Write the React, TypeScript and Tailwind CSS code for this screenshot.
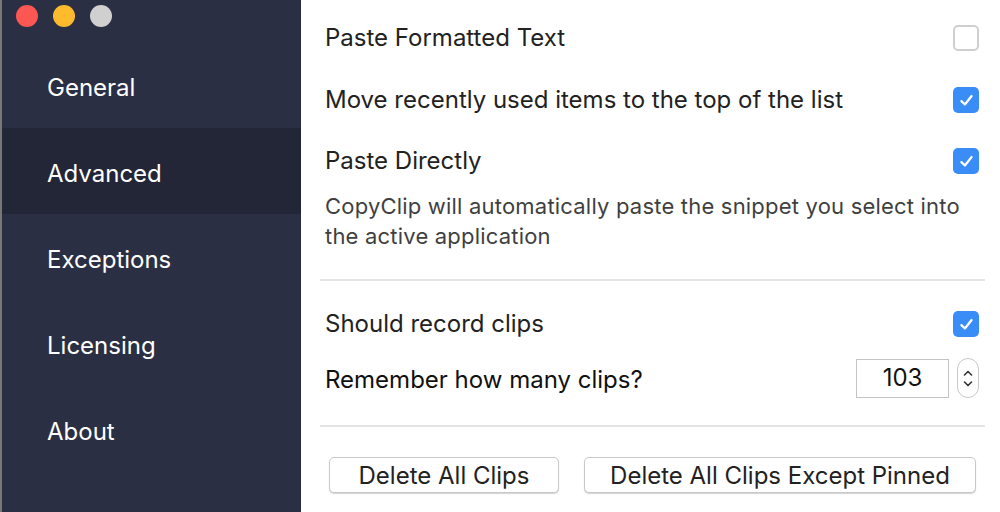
import { ReactNode } from "react";

const NAV = ["General", "Advanced", "Exceptions", "Licensing", "About"];

function Casilla({ marcada }: { marcada: boolean }) {
  if (!marcada) {
    return <div className="h-[26px] w-[26px] shrink-0 rounded-[5px] border-2 border-[#cfcfcf] bg-white" />;
  }
  return (
    <div className="flex h-[26px] w-[26px] shrink-0 items-center justify-center rounded-[5px] bg-[#3a8df6]">
      <svg viewBox="0 0 16 16" className="h-[17px] w-[17px]" fill="none">
        <path d="M3.2 8.6 L6.5 11.8 L12.8 3.8" stroke="white" strokeWidth="2.1" strokeLinecap="round" strokeLinejoin="round" />
      </svg>
    </div>
  );
}

function Fila({ alto, children, marcada }: { alto: string; children: ReactNode; marcada: boolean }) {
  return (
    <div className={`flex items-center justify-between ${alto}`}>
      <span className="text-[24px] text-[#222]">{children}</span>
      <Casilla marcada={marcada} />
    </div>
  );
}

function Boton({ children, ancho }: { children: ReactNode; ancho: string }) {
  return (
    <button className={`h-[36px] ${ancho} rounded-[5px] border border-[#c9c9c9] bg-white text-[24px] text-[#222] shadow-[0_1px_1px_rgba(0,0,0,0.18)]`}>
      {children}
    </button>
  );
}

export default function App() {
  return (
    <div className="flex h-[512px] w-[1000px] overflow-hidden bg-white" style={{ fontFamily: "Inter, 'Liberation Sans', sans-serif" }}>
      {/* barra lateral */}
      <aside className="flex w-[301px] shrink-0 flex-col border-l-2 border-[#777] bg-[#2b2f43]">
        <div className="flex h-[42px] items-start gap-[15px] pl-[14px] pt-[5px]">
          <span className="h-[22px] w-[22px] rounded-full bg-[#fd5754]" />
          <span className="h-[22px] w-[22px] rounded-full bg-[#febb2e]" />
          <span className="h-[22px] w-[22px] rounded-full bg-[#d0d0d0]" />
        </div>
        {NAV.map((item) => (
          <div
            key={item}
            className={`flex h-[86px] items-center pl-[45px] pt-[6px] text-[24px] text-white ${item === "Advanced" ? "bg-[#222636]" : ""}`}
          >
            {item}
          </div>
        ))}
      </aside>

      {/* contenido */}
      <main className="flex flex-1 flex-col pl-[24px] pr-[21px] pt-[7px]">
        <Fila alto="h-[62px]" marcada={false}>Paste Formatted Text</Fila>
        <Fila alto="h-[62px]" marcada>Move recently used items to the top of the list</Fila>
        <Fila alto="h-[60px]" marcada>Paste Directly</Fila>
        <p className="text-[22px] leading-[30px] tracking-[0.2px] text-[#3f3f3f]">
          CopyClip will automatically paste the snippet you select into the active application
        </p>

        <div className="-ml-[5px] -mr-[6px] mt-[28px] h-[2px] bg-[#e4e4e4]" />

        <div className="mt-[13px]">
          <Fila alto="h-[60px]" marcada>Should record clips</Fila>
        </div>
        <div className="flex h-[48px] items-center justify-between">
          <span className="pt-[4px] text-[24px] text-[#111]">Remember how many clips?</span>
          <div className="flex items-center gap-[8px]">
            <div className="flex h-[39px] w-[93px] items-center justify-center border border-[#c4c4c4] text-[24px] text-[#111]">
              103
            </div>
            <div className="flex h-[40px] w-[22px] flex-col items-center justify-center gap-[5px] rounded-full border border-[#c8c8c8] bg-white">
              <svg viewBox="0 0 10 6" className="h-[6px] w-[10px]" fill="none">
                <path d="M1.5 5 L5 1.5 L8.5 5" stroke="#333" strokeWidth="1.6" strokeLinecap="round" strokeLinejoin="round" />
              </svg>
              <svg viewBox="0 0 10 6" className="h-[6px] w-[10px]" fill="none">
                <path d="M1.5 1 L5 4.5 L8.5 1" stroke="#333" strokeWidth="1.6" strokeLinecap="round" strokeLinejoin="round" />
              </svg>
            </div>
          </div>
        </div>

        <div className="-ml-[5px] -mr-[6px] mt-[23px] h-[2px] bg-[#e4e4e4]" />

        <div className="mt-[30px] flex gap-[25px] pl-[4px]">
          <Boton ancho="w-[230px]">Delete All Clips</Boton>
          <Boton ancho="w-[392px]">Delete All Clips Except Pinned</Boton>
        </div>
      </main>
    </div>
  );
}
